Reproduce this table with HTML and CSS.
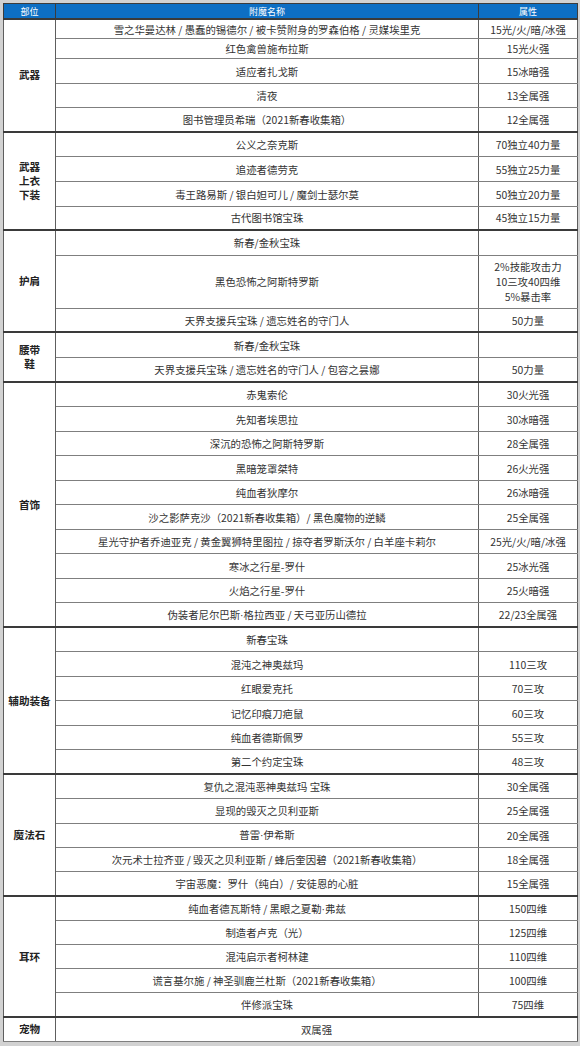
FILE: index.html
```html
<!DOCTYPE html>
<html lang="zh-CN">
<head>
<meta charset="utf-8">
<title>附魔表</title>
<link rel="stylesheet" href="styles.css">
</head>
<body>
<table class="enchant">
  <colgroup>
    <col class="c-part">
    <col class="c-name">
    <col class="c-attr">
  </colgroup>
  <thead>
    <tr class="head"><th>部位</th><th>附魔名称</th><th>属性</th></tr>
  </thead>
  <tbody>
    <tr class="h20"><td class="part" rowspan="5">武器</td><td>雪之华曼达林 / 愚蠢的锡德尔 / 被卡赞附身的罗森伯格 / 灵媒埃里克</td><td>15光/火/暗/冰强</td></tr>
    <tr class="h20"><td>红色禽兽施布拉斯</td><td>15光火强</td></tr>
    <tr class="h25"><td>适应者扎戈斯</td><td>15冰暗强</td></tr>
    <tr class="h24"><td>清夜</td><td>13全属强</td></tr>
    <tr class="h24"><td>图书管理员希瑞（2021新春收集箱）</td><td>12全属强</td></tr>
  </tbody>
  <tbody>
    <tr class="h25"><td class="part" rowspan="4">武器<br>上衣<br>下装</td><td>公义之奈克斯</td><td>70独立40力量</td></tr>
    <tr class="h25"><td>追迹者德劳克</td><td>55独立25力量</td></tr>
    <tr class="h25"><td>毒王路易斯 / 银白妲可儿 / 魔剑士瑟尔莫</td><td>50独立20力量</td></tr>
    <tr class="h23"><td>古代图书馆宝珠</td><td>45独立15力量</td></tr>
  </tbody>
  <tbody>
    <tr class="h26"><td class="part" rowspan="3">护肩</td><td>新春/金秋宝珠</td><td></td></tr>
    <tr class="h53"><td>黑色恐怖之阿斯特罗斯</td><td class="multi">2%技能攻击力<br>10三攻40四维<br>5%暴击率</td></tr>
    <tr class="h24"><td>天界支援兵宝珠 / 遗忘姓名的守门人</td><td>50力量</td></tr>
  </tbody>
  <tbody>
    <tr class="h25"><td class="part" rowspan="2">腰带<br>鞋</td><td>新春/金秋宝珠</td><td></td></tr>
    <tr class="h25"><td>天界支援兵宝珠 / 遗忘姓名的守门人 / 包容之昙娜</td><td>50力量</td></tr>
  </tbody>
  <tbody>
    <tr><td class="part" rowspan="10">首饰</td><td>赤鬼索伦</td><td>30火光强</td></tr>
    <tr><td>先知者埃思拉</td><td>30冰暗强</td></tr>
    <tr><td>深沉的恐怖之阿斯特罗斯</td><td>28全属强</td></tr>
    <tr><td>黑暗笼罩桀特</td><td>26火光强</td></tr>
    <tr><td>纯血者狄摩尔</td><td>26冰暗强</td></tr>
    <tr><td>沙之影萨克沙（2021新春收集箱）/ 黑色魔物的逆鳞</td><td>25全属强</td></tr>
    <tr><td>星光守护者乔迪亚克 / 黄金翼狮特里图拉 / 掠夺者罗斯沃尔 / 白羊座卡莉尔</td><td>25光/火/暗/冰强</td></tr>
    <tr><td>寒冰之行星-罗什</td><td>25冰光强</td></tr>
    <tr><td>火焰之行星-罗什</td><td>25火暗强</td></tr>
    <tr><td>伪装者尼尔巴斯<span class="dot">·</span>格拉西亚 / 天弓亚历山德拉</td><td>22/23全属强</td></tr>
  </tbody>
  <tbody>
    <tr><td class="part" rowspan="6">辅助装备</td><td>新春宝珠</td><td></td></tr>
    <tr><td>混沌之神奥兹玛</td><td>110三攻</td></tr>
    <tr><td>红眼爱克托</td><td>70三攻</td></tr>
    <tr><td>记忆印痕刀疤鼠</td><td>60三攻</td></tr>
    <tr><td>纯血者德斯佩罗</td><td>55三攻</td></tr>
    <tr><td>第二个约定宝珠</td><td>48三攻</td></tr>
  </tbody>
  <tbody>
    <tr class="h244"><td class="part" rowspan="5">魔法石</td><td>复仇之混沌恶神奥兹玛 宝珠</td><td>30全属强</td></tr>
    <tr class="h244"><td>显现的毁灭之贝利亚斯</td><td>25全属强</td></tr>
    <tr class="h244"><td>普雷<span class="dot">·</span>伊希斯</td><td>20全属强</td></tr>
    <tr class="h244"><td>次元术士拉齐亚 / 毁灭之贝利亚斯 / 蜂后奎因碧（2021新春收集箱）</td><td>18全属强</td></tr>
    <tr class="h244"><td>宇宙恶魔：罗什（纯白）/ 安徒恩的心脏</td><td>15全属强</td></tr>
  </tbody>
  <tbody>
    <tr class="h242"><td class="part" rowspan="5">耳环</td><td>纯血者德瓦斯特 / 黑眼之夏勒<span class="dot">·</span>弗兹</td><td>150四维</td></tr>
    <tr class="h242"><td>制造者卢克（光）</td><td>125四维</td></tr>
    <tr class="h242"><td>混沌启示者柯林建</td><td>110四维</td></tr>
    <tr class="h242"><td>谎言基尔施 / 神圣驯鹿兰杜斯（2021新春收集箱）</td><td>100四维</td></tr>
    <tr class="h242"><td>伴修派宝珠</td><td>75四维</td></tr>
  </tbody>
  <tbody>
    <tr class="h24"><td class="part">宠物</td><td colspan="2">双属强</td></tr>
  </tbody>
</table>
</body>
</html>
```

FILE: styles.css
```css
html, body {
  margin: 0;
  padding: 0;
}

body {
  background: #d2d2d2;
  padding: 3px 3px 0 3px;
  width: 574px;
  font-family: "Noto Sans CJK SC", "Noto Sans", sans-serif;
}

.enchant {
  width: 574px;
  border-collapse: collapse;
  table-layout: fixed;
  background: #ffffff;
  border: 1px solid #3c3c3c;
  color: #333333;
  font-size: 10.4px;
  line-height: 13px;
}

.c-part { width: 52px; }
.c-name { width: 423px; }
.c-attr { width: 99px; }

.enchant thead tr { height: 15px; }

.enchant th {
  background: #0d6fc4;
  color: #ffffff;
  font-weight: normal;
  font-size: 9px;
  line-height: 11px;
  height: 14px;
  padding: 0;
  border: 1px solid #3c3c3c;
}

.enchant td {
  padding: 0;
  text-align: center;
  vertical-align: middle;
  white-space: nowrap;
  border-top: 1px solid #7f7f7f;
  border-bottom: 1px solid #7f7f7f;
  border-left: 1px solid #5e5e5e;
  border-right: 1px solid #5e5e5e;
}

.enchant tbody {
  border-top: 2px solid #3a3a3a;
}

.enchant tbody tr { height: 24.5px; }
.enchant tbody tr.h20 { height: 19.8px; }
.enchant tbody tr.h23 { height: 23.3px; }
.enchant tbody tr.h24 { height: 24px; }
.enchant tbody tr.h25 { height: 25px; }
.enchant tbody tr.h26 { height: 25.7px; }
.enchant tbody tr.h53 { height: 52.7px; }
.enchant tbody tr.h244 { height: 24.4px; }
.enchant tbody tr.h242 { height: 24.2px; }

.enchant td.part {
  font-weight: bold;
  color: #222222;
  font-size: 10.6px;
  line-height: 14px;
}

.enchant td.multi {
  line-height: 15px;
}

.dot {
  font-family: "Liberation Sans", sans-serif;
}
```
